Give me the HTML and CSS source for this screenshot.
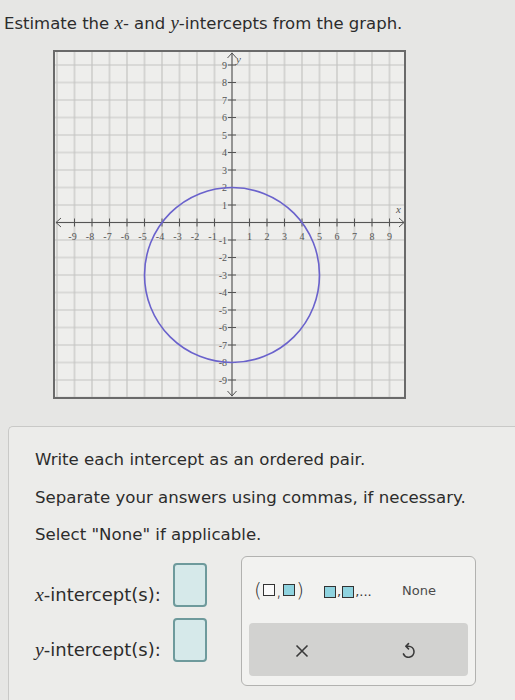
FILE: index.html
```html
<!DOCTYPE html>
<html>
<head>
<meta charset="utf-8">
<link rel="stylesheet" href="styles.css">
</head>
<body>
<p class="title">Estimate the <i class="var">x</i>- and <i class="var">y</i>-intercepts from the graph.</p>
<div class="graph">
<svg width="353" height="349" viewBox="53 49 353 349" xmlns="http://www.w3.org/2000/svg">
  <defs>
    <pattern id="grid" patternUnits="userSpaceOnUse" x="223.25" y="212.75" width="17.5" height="17.5">
      <path d="M8.75 0 V17.5 M0 8.75 H17.5" stroke="#c4c4c2" stroke-width="1.2" fill="none"/>
    </pattern>
  </defs>
  <rect x="53" y="49" width="353" height="349" fill="#eeeeec"/>
  <rect x="53" y="49" width="353" height="349" fill="url(#grid)"/>
  <rect x="54" y="50" width="351" height="347" fill="none" stroke="#6a6a6a" stroke-width="2"/>
  <g stroke="#555" stroke-width="1" fill="none">
    <path d="M56 221.5 H404 M61 217 L56 221.5 L61 226 M399 217 L404 221.5 L399 226"/>
    <path d="M232 52 V395 M227.5 57 L232 52 L236.5 57 M227.5 390 L232 395 L236.5 390"/>
    <path d="M74.5 217.5v8M92 217.5v8M109.5 217.5v8M127 217.5v8M144.5 217.5v8M162 217.5v8M179.5 217.5v8M197 217.5v8M214.5 217.5v8M249.5 217.5v8M267 217.5v8M284.5 217.5v8M302 217.5v8M319.5 217.5v8M337 217.5v8M354.5 217.5v8M372 217.5v8M389.5 217.5v8"/>
    <path d="M228 64h8M228 81.5h8M228 99h8M228 116.5h8M228 134h8M228 151.5h8M228 169h8M228 186.5h8M228 204h8M228 239h8M228 256.5h8M228 274h8M228 291.5h8M228 309h8M228 326.5h8M228 344h8M228 361.5h8M228 379h8"/>
  </g>
  <g font-family="'Liberation Serif', serif" font-size="10" fill="#555" text-anchor="middle">
    <text x="72.5" y="239">-9</text><text x="90" y="239">-8</text><text x="107.5" y="239">-7</text><text x="125" y="239">-6</text><text x="142.5" y="239">-5</text><text x="160" y="239">-4</text><text x="177.5" y="239">-3</text><text x="195" y="239">-2</text><text x="212.5" y="239">-1</text>
    <text x="249.5" y="239">1</text><text x="267" y="239">2</text><text x="284.5" y="239">3</text><text x="302" y="239">4</text><text x="319.5" y="239">5</text><text x="337" y="239">6</text><text x="354.5" y="239">7</text><text x="372" y="239">8</text><text x="389.5" y="239">9</text>
  </g>
  <g font-family="'Liberation Serif', serif" font-size="10" fill="#555" text-anchor="end">
    <text x="227" y="67.5">9</text><text x="227" y="85">8</text><text x="227" y="102.5">7</text><text x="227" y="120">6</text><text x="227" y="137.5">5</text><text x="227" y="155">4</text><text x="227" y="172.5">3</text><text x="227" y="190">2</text><text x="227" y="207.5">1</text>
    <text x="227" y="242.5">-1</text><text x="227" y="260">-2</text><text x="227" y="277.5">-3</text><text x="227" y="295">-4</text><text x="227" y="312.5">-5</text><text x="227" y="330">-6</text><text x="227" y="347.5">-7</text><text x="227" y="365">-8</text><text x="227" y="382.5">-9</text>
  </g>
  <text x="396" y="212" font-family="'Liberation Serif', serif" font-style="italic" font-size="11" fill="#555">x</text>
  <text x="236" y="62" font-family="'Liberation Serif', serif" font-style="italic" font-size="11" fill="#555">y</text>
  <circle cx="232" cy="274" r="87.5" fill="none" stroke="#6a62cc" stroke-width="1.6"/>
</svg>
</div>
<div class="panel">
  <p class="line">Write each intercept as an ordered pair.</p>
  <p class="line">Separate your answers using commas, if necessary.</p>
  <p class="line">Select "None" if applicable.</p>
  <div class="answer">
    <div class="fields">
      <div class="row">
        <span class="label"><i class="var">x</i>-intercept(s):</span>
        <span class="box"></span>
      </div>
      <div class="row">
        <span class="label"><i class="var">y</i>-intercept(s):</span>
        <span class="box"></span>
      </div>
    </div>
    <div class="keypad">
      <div class="keys">
        <span class="key pair">(<span class="sq"></span>,<span class="sq fill"></span>)</span>
        <span class="key list"><span class="sq fill"></span>,<span class="sq fill"></span>,...</span>
        <span class="key none">None</span>
      </div>
      <div class="actions">
        <span class="act">
          <svg width="16" height="16" viewBox="0 0 16 16"><path d="M2.5 2.5 L13.5 13.5 M13.5 2.5 L2.5 13.5" stroke="#3a3a3a" stroke-width="1.6" fill="none"/></svg>
        </span>
        <span class="act undo">
          <svg width="17" height="18" viewBox="0 0 16 17"><path d="M6 4 H8 A5.2 5.2 0 1 1 3.2 11.2" stroke="#3a3a3a" stroke-width="1.5" fill="none" stroke-linecap="round"/><path d="M8 1.5 L5.5 4 L8 6.5" stroke="#3a3a3a" stroke-width="1.5" fill="none" stroke-linecap="round" stroke-linejoin="round"/></svg>
        </span>
      </div>
    </div>
  </div>
</div>
</body>
</html>
```

FILE: styles.css
```css
html, body {
  margin: 0;
  padding: 0;
}
body {
  background: #e6e6e4;
  font-family: "DejaVu Sans", Verdana, sans-serif;
  color: #2c2c2c;
  width: 515px;
  height: 700px;
  overflow: hidden;
}
.title {
  margin: 0;
  padding: 13px 0 0 4px;
  font-size: 16.5px;
  line-height: 20px;
}
.var {
  font-family: "Liberation Serif", serif;
  font-style: italic;
  font-size: 1.15em;
}
.graph {
  margin: 16px 0 0 53px;
  height: 349px;
}
.graph svg {
  display: block;
}
.panel {
  margin: 27px 0 0 8px;
  border: 1px solid #c9c9c7;
  border-right: none;
  border-bottom: none;
  border-radius: 5px 0 0 0;
  background: #ececea;
  padding: 23px 0 0 26px;
  height: 251px;
  overflow: hidden;
}
.line {
  margin: 0 0 17.5px 0;
  font-size: 16.6px;
  line-height: 20px;
}
.answer {
  display: flex;
  align-items: flex-start;
  margin-top: -7px;
}
.fields {
  display: flex;
  flex-direction: column;
  gap: 11px;
  padding-top: 7px;
  width: 174px;
}
.row {
  display: flex;
  align-items: flex-end;
}
.label {
  font-size: 18px;
  line-height: 20px;
  width: 138px;
  padding-bottom: 2px;
  white-space: nowrap;
}
.label .var {
  font-size: 1.1em;
}
.box {
  width: 30px;
  height: 40px;
  border: 2px solid #6e9a9c;
  border-radius: 4px;
  background: #d6e9ea;
}
.keypad {
  margin-left: 32px;
  width: 219px;
  height: 119px;
  border: 1px solid #b2b2b0;
  border-radius: 6px;
  background: #f2f2f0;
  padding: 0 7px 9px 7px;
  display: flex;
  flex-direction: column;
}
.keys {
  height: 66px;
  flex: none;
  display: flex;
  align-items: center;
  padding-left: 5px;
}
.key {
  display: inline-flex;
  align-items: center;
  color: #333;
}
.pair {
  font-size: 20px;
  font-weight: 300;
  width: 70px;
  gap: 1px;
}
.list {
  font-size: 13px;
  width: 78px;
  gap: 1px;
  padding-top: 4px;
}
.none {
  font-size: 13px;
  color: #4a4a4a;
  padding-top: 1px;
}
.sq {
  display: inline-block;
  width: 10px;
  height: 10px;
  border: 1.5px solid #333;
  background: #fafafa;
}
.pair .sq {
  width: 10px;
  height: 10px;
}
.sq.fill {
  background: #8fd3df;
}
.actions {
  flex: 1;
  background: #d2d2d0;
  border-radius: 4px;
  display: flex;
  align-items: center;
}
.act {
  flex: 1;
  display: flex;
  justify-content: center;
  padding-top: 4px;
}
.act.undo {
  padding-right: 6px;
}
```
